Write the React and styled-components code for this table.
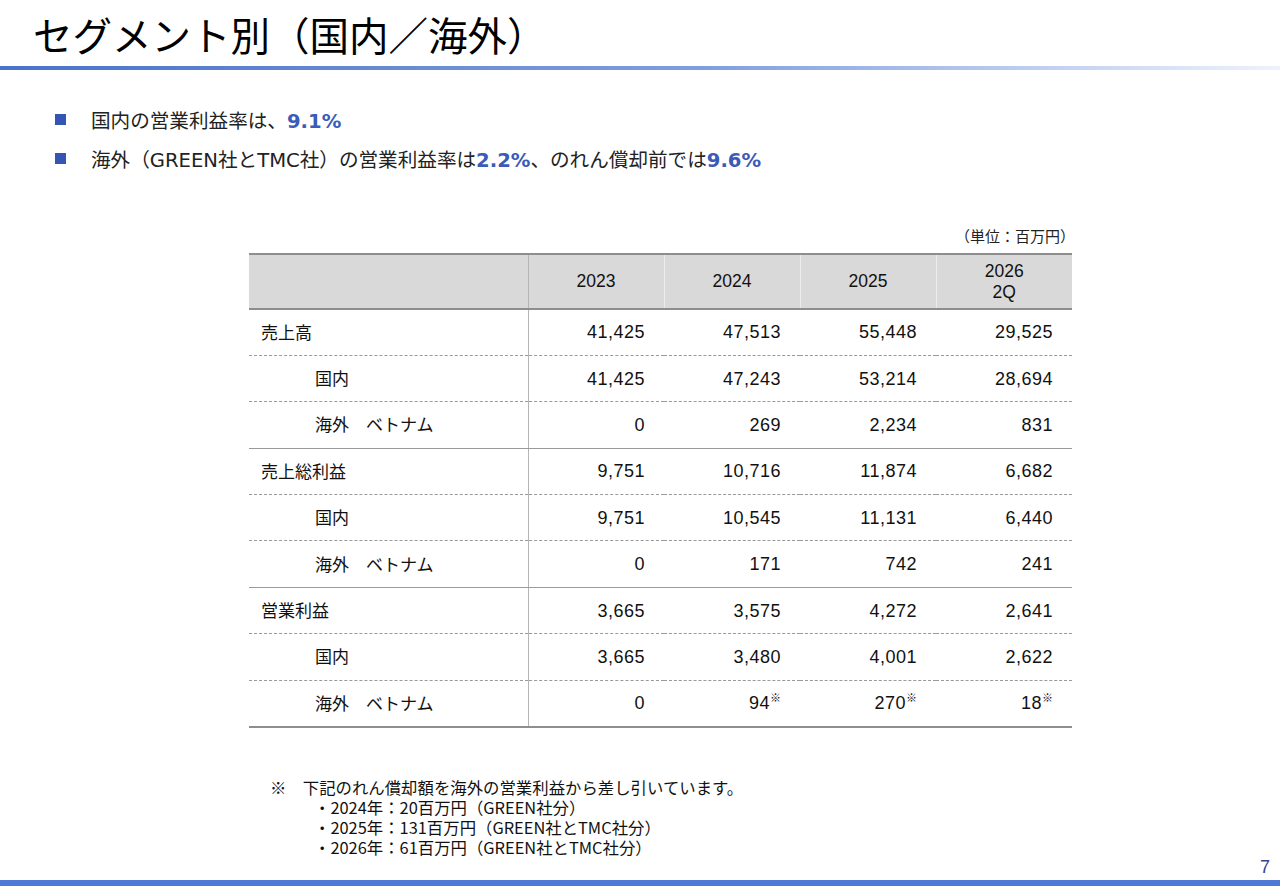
import React from "react";
import styled, { createGlobalStyle } from "styled-components";

const Global = createGlobalStyle`
  html, body { margin: 0; padding: 0; background: #fff; }
  body { width: 1280px; height: 886px; overflow: hidden; }
  * { box-sizing: border-box; }
`;

const CJK = `"Noto Sans CJK JP", sans-serif`;
const BODY = `"DejaVu Sans", "Noto Sans CJK JP", sans-serif`;
const TABLE = `"Liberation Sans", "Noto Sans CJK JP", sans-serif`;

const Page = styled.div`
  position: relative;
  width: 1280px;
  height: 886px;
  display: flex;
  flex-direction: column;
  font-family: ${CJK};
  color: #111;
`;

const TitleBar = styled.header`
  height: 66px;
  display: flex;
  align-items: center;
  padding-left: 33px;
`;

const Title = styled.h1`
  margin: 0;
  font-family: ${CJK};
  font-weight: 400;
  font-size: 39.5px;
  line-height: 1;
  color: #000;
  padding-top: 2px;
`;

const Rule = styled.div`
  height: 4px;
  background: linear-gradient(to right, #4a72c9 0%, #7f9edf 55%, #c9d6f2 85%, #eef2fb 100%);
`;

const Bullets = styled.ul`
  list-style: none;
  margin: 35px 0 0 0;
  padding: 0 0 0 55px;
  display: flex;
  flex-direction: column;
  gap: 11px;
`;

const Bullet = styled.li`
  display: flex;
  align-items: center;
  height: 28px;
  font-family: ${BODY};
  font-size: 19.6px;
  color: #222;
  &::before {
    content: "";
    width: 11px;
    height: 11px;
    background: #3555b5;
    margin-right: 25px;
    flex: none;
  }
`;

const Em = styled.b`
  color: #3a5bb8;
  font-weight: 700;
`;

const TableWrap = styled.section`
  margin: 54px 0 0 249px;
  width: 823px;
  display: flex;
  flex-direction: column;
`;

const Unit = styled.div`
  align-self: flex-end;
  height: 20px;
  line-height: 20px;
  font-family: ${CJK};
  font-size: 15px;
  color: #222;
  margin-bottom: 7px;
  margin-right: -3px;
`;

const Table = styled.table`
  border-collapse: collapse;
  width: 823px;
  table-layout: fixed;
  font-family: ${TABLE};
  color: #111;
`;

const Th = styled.th`
  background: #d9d9d9;
  height: 55px;
  padding: 0;
  font-weight: 400;
  font-size: 17.5px;
  line-height: 21px;
  text-align: center;
  border-top: 2px solid #8e8e8e;
  border-bottom: 2px solid #8e8e8e;
  border-left: 1px solid ${(p) => (p.$first ? "#b5b5b5" : "#ececec")};
  &:first-child { border-left: none; border-right: 1px solid #b5b5b5; }
`;

const Td = styled.td`
  height: 46.4px;
  padding: 0;
  font-size: 17px;
  vertical-align: middle;
  border-bottom: ${(p) =>
    p.$edge === "last" ? "2px solid #8e8e8e" : p.$edge === "solid" ? "1px solid #9a9a9a" : "1px dashed #9a9a9a"};
`;

const LabelCell = styled(Td)`
  font-family: ${CJK};
  padding-left: ${(p) => (p.$sub ? "66px" : "12px")};
  padding-bottom: 2px;
  border-right: 1px solid #b5b5b5;
`;

const NumCell = styled(Td)`
  text-align: right;
  padding-right: 19px;
  padding-top: 1px;
  letter-spacing: 0.5px;
  font-size: 18px;
`;

const Mark = styled.sup`
  font-family: ${CJK};
  font-size: 11px;
  letter-spacing: 0;
  vertical-align: 0;
  position: relative;
  top: -7px;
`;

const Notes = styled.div`
  margin: 49px 0 0 270px;
  font-family: ${CJK};
  font-size: 16.4px;
  display: flex;
  flex-direction: column;
  color: #111;
`;

const NoteLine = styled.div`
  height: 20px;
  line-height: 20px;
  display: flex;
  align-items: center;
  padding-left: ${(p) => (p.$indent ? "44px" : "0")};
`;

const NoteText = styled.span`
  display: inline-block;
  line-height: 16px;
`;

const Spacer = styled.div`
  flex: 1;
`;

const Footer = styled.footer`
  display: flex;
  justify-content: flex-end;
  padding: 0 10px 3px 0;
`;

const PageNum = styled.span`
  font-family: "Liberation Sans", sans-serif;
  font-size: 18px;
  line-height: 20px;
  color: #34458a;
`;

const BottomBar = styled.div`
  height: 6px;
  background: #4f79d6;
`;

const years = ["2023", "2024", "2025"];

const rows = [
  { label: "売上高", v: ["41,425", "47,513", "55,448", "29,525"] },
  { label: "国内", sub: true, v: ["41,425", "47,243", "53,214", "28,694"] },
  { label: "海外　ベトナム", sub: true, v: ["0", "269", "2,234", "831"] },
  { label: "売上総利益", v: ["9,751", "10,716", "11,874", "6,682"] },
  { label: "国内", sub: true, v: ["9,751", "10,545", "11,131", "6,440"] },
  { label: "海外　ベトナム", sub: true, v: ["0", "171", "742", "241"] },
  { label: "営業利益", v: ["3,665", "3,575", "4,272", "2,641"] },
  { label: "国内", sub: true, v: ["3,665", "3,480", "4,001", "2,622"] },
  { label: "海外　ベトナム", sub: true, v: ["0", "94", "270", "18"], marks: [false, true, true, true] },
];

const notes = [
  "・2024年：20百万円（GREEN社分）",
  "・2025年：131百万円（GREEN社とTMC社分）",
  "・2026年：61百万円（GREEN社とTMC社分）",
];

export default function App() {
  return (
    <>
      <Global />
      <Page>
        <TitleBar>
          <Title>セグメント別（国内／海外）</Title>
        </TitleBar>
        <Rule />
        <Bullets>
          <Bullet>
            <span>
              国内の営業利益率は、<Em>9.1%</Em>
            </span>
          </Bullet>
          <Bullet>
            <span>
              海外（GREEN社とTMC社）の営業利益率は<Em>2.2%</Em>、のれん償却前では<Em>9.6%</Em>
            </span>
          </Bullet>
        </Bullets>
        <TableWrap>
          <Unit>（単位：百万円）</Unit>
          <Table>
            <colgroup>
              <col style={{ width: "279px" }} />
              <col style={{ width: "136px" }} />
              <col style={{ width: "136px" }} />
              <col style={{ width: "136px" }} />
              <col style={{ width: "136px" }} />
            </colgroup>
            <thead>
              <tr>
                <Th />
                {years.map((y, i) => (
                  <Th key={y} $first={i === 0}>
                    {y}
                  </Th>
                ))}
                <Th>
                  2026
                  <br />
                  2Q
                </Th>
              </tr>
            </thead>
            <tbody>
              {rows.map((r, i) => {
                const next = rows[i + 1];
                const edge = !next ? "last" : next.sub ? "dashed" : "solid";
                return (
                  <tr key={i}>
                    <LabelCell $sub={r.sub} $edge={edge}>
                      {r.label}
                    </LabelCell>
                    {r.v.map((n, j) => (
                      <NumCell key={j} $edge={edge}>
                        {n}
                        {r.marks && r.marks[j] && <Mark>※</Mark>}
                      </NumCell>
                    ))}
                  </tr>
                );
              })}
            </tbody>
          </Table>
        </TableWrap>
        <Notes>
          <NoteLine>
            <NoteText>※　下記のれん償却額を海外の営業利益から差し引いています。</NoteText>
          </NoteLine>
          {notes.map((n) => (
            <NoteLine key={n} $indent>
              <NoteText>{n}</NoteText>
            </NoteLine>
          ))}
        </Notes>
        <Spacer />
        <Footer>
          <PageNum>7</PageNum>
        </Footer>
        <BottomBar />
      </Page>
    </>
  );
}
